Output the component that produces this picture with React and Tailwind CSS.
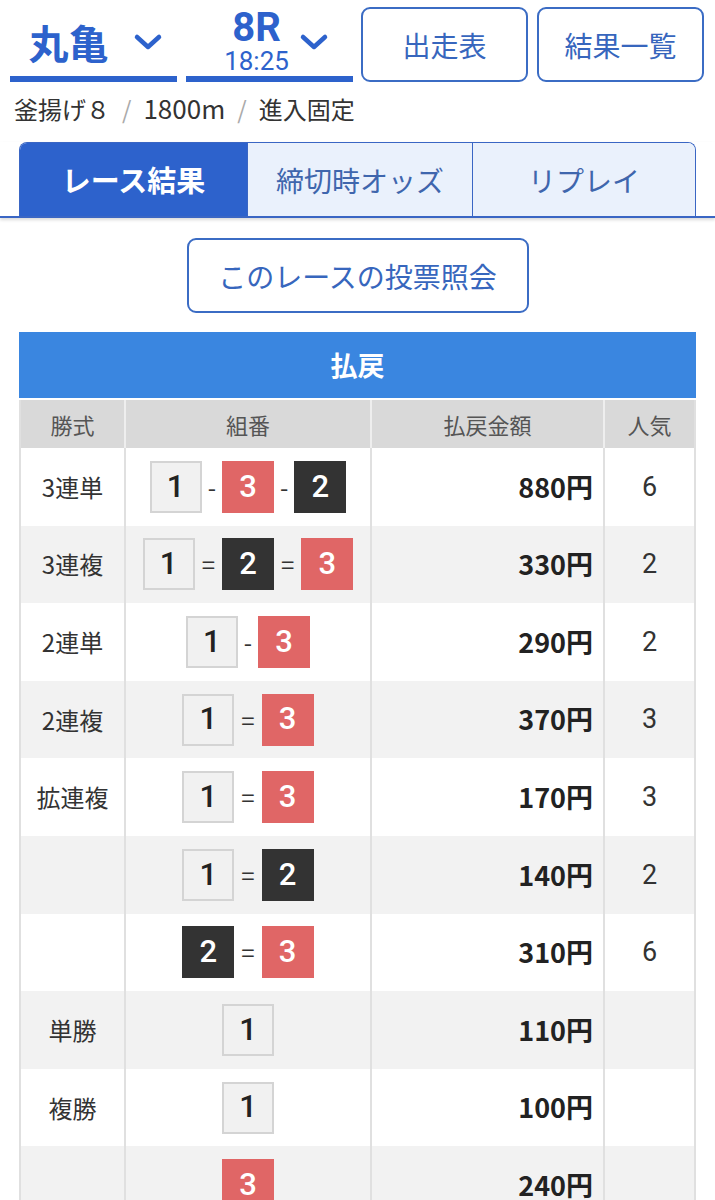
import React from 'react';

const FONT = { fontFamily: '"Noto Sans CJK JP", "Noto Sans", sans-serif' };
const DIGITS = { fontFamily: 'Roboto, "Noto Sans", sans-serif' };

// frame colours by boat number
const BOX = {
  1: 'bg-[#f1f1f1] border-2 border-[#d4d4d4] text-[#222]',
  2: 'bg-[#333333] text-white',
  3: 'bg-[#e06666] text-white',
};

const ROWS = [
  { kind: '3連単', combo: [1, 3, 2], sep: '-', pay: '880円', pop: '6' },
  { kind: '3連複', combo: [1, 2, 3], sep: '=', pay: '330円', pop: '2' },
  { kind: '2連単', combo: [1, 3], sep: '-', pay: '290円', pop: '2' },
  { kind: '2連複', combo: [1, 3], sep: '=', pay: '370円', pop: '3' },
  { kind: '拡連複', combo: [1, 3], sep: '=', pay: '170円', pop: '3' },
  { kind: '', combo: [1, 2], sep: '=', pay: '140円', pop: '2' },
  { kind: '', combo: [2, 3], sep: '=', pay: '310円', pop: '6' },
  { kind: '単勝', combo: [1], sep: '', pay: '110円', pop: '' },
  { kind: '複勝', combo: [1], sep: '', pay: '100円', pop: '' },
  { kind: '', combo: [3], sep: '', pay: '240円', pop: '' },
];

const Chevron = () => (
  <svg width="30" height="20" viewBox="0 0 30 20" className="shrink-0">
    <polyline points="4,5 15,15 26,5" fill="none" stroke="#2d62cc" strokeWidth="4.5" strokeLinecap="round" strokeLinejoin="round" />
  </svg>
);

const Boat = ({ n }) => (
  <div className={`w-[52px] h-[52px] flex items-center justify-center text-[31px] font-medium ${BOX[n]}`} style={DIGITS}>
    {n}
  </div>
);

const Combo = ({ combo, sep }) => (
  <div className={`flex items-center justify-center ${sep === '=' ? 'gap-[7px]' : 'gap-[6px]'}`}>
    {combo.map((n, i) => (
      <React.Fragment key={i}>
        {i > 0 && <span className="text-[24px] text-[#333] leading-none">{sep}</span>}
        <Boat n={n} />
      </React.Fragment>
    ))}
  </div>
);

export default function App() {
  return (
    <div className="w-[715px] h-[1200px] overflow-hidden bg-white" style={FONT}>
      {/* top selectors */}
      <div className="flex pt-[7px] pl-[10px] pr-[10px] gap-[9px]">
        <div className="w-[167px] h-[75px] flex flex-col">
          <div className="flex-1 flex items-center justify-center gap-[24px] pl-[4px]">
            <span className="text-[40px] font-bold text-[#2d62cc] leading-none">丸亀</span>
            <Chevron />
          </div>
          <div className="h-[6px] bg-[#2d62cc]" />
        </div>
        <div className="w-[167px] h-[75px] flex flex-col">
          <div className="flex-1 flex items-center justify-center gap-[10px] pl-[14px]">
            <div className="flex flex-col items-center">
              <span className="text-[40px] font-bold text-[#2d62cc] leading-[40px]" style={DIGITS}>8R</span>
              <span className="text-[26px] text-[#2d62cc] leading-[27px]" style={DIGITS}>18:25</span>
            </div>
            <Chevron />
          </div>
          <div className="h-[6px] bg-[#2d62cc]" />
        </div>
        <button className="w-[167px] h-[75px] ml-[-1px] rounded-[9px] border-2 border-[#3b6cc4] text-[28px] text-[#3766bd]">
          出走表
        </button>
        <button className="w-[167px] h-[75px] rounded-[9px] border-2 border-[#3b6cc4] text-[28px] text-[#3766bd]">
          結果一覧
        </button>
      </div>

      {/* race info */}
      <div className="pl-[14px] pt-[10px] text-[24px] text-[#333] leading-[32px]">
        釜揚げ８<span className="text-[#aaa] mx-[12px]">/</span><span className="text-[26px]">1800m</span><span className="text-[#aaa] mx-[12px]">/</span>進入固定
      </div>

      {/* tabs */}
      <div className="mt-[17px] border-b-2 border-[#3a66c4] shadow-[0_2px_3px_rgba(0,0,0,0.15)]">
        <div className="mx-[19px] h-[74px] flex rounded-t-[8px] overflow-hidden border border-b-0 border-[#3a66c4]">
          <div className="w-[227px] bg-[#2d62cc] flex items-center justify-center text-[29px] font-bold text-white">
            レース結果
          </div>
          <div className="w-[225px] bg-[#eaf1fc] border-l border-[#3a66c4] flex items-center justify-center text-[28px] text-[#3f66ad]">
            締切時オッズ
          </div>
          <div className="flex-1 bg-[#eaf1fc] border-l border-[#3a66c4] flex items-center justify-center text-[28px] text-[#3f66ad]">
            リプレイ
          </div>
        </div>
      </div>

      {/* ticket button */}
      <div className="flex justify-center pt-[20px] pb-[19px]">
        <button className="w-[342px] h-[75px] rounded-[9px] border-2 border-[#3b6cc4] text-[28px] text-[#3766bd]">
          このレースの投票照会
        </button>
      </div>

      {/* payout table */}
      <div className="mx-[19px]">
        <div className="h-[66px] bg-[#3a86e0] flex items-center justify-center text-[27px] font-bold text-white">
          払戻
        </div>
        <div className="mt-[2px] h-[48px] flex bg-[#d9d9d9] text-[22px] text-[#555] border-x-2 border-[#e0e0e0]">
          <div className="w-[103px] flex items-center justify-center">勝式</div>
          <div className="w-[246px] border-l-2 border-[#eeeeee] flex items-center justify-center">組番</div>
          <div className="w-[233px] border-l-2 border-[#eeeeee] flex items-center justify-center">払戻金額</div>
          <div className="flex-1 border-l-2 border-[#eeeeee] flex items-center justify-center">人気</div>
        </div>
        {ROWS.map((r, i) => (
          <div
            key={i}
            className={`h-[77.6px] flex border-x-2 border-[#e0e0e0] ${i % 2 === 1 ? 'bg-[#f2f2f2]' : 'bg-white'}`}
          >
            <div className="w-[103px] flex items-center justify-center text-[24px] text-[#333]">{r.kind}</div>
            <div className="w-[246px] border-l-2 border-[#e0e0e0] flex items-center justify-center">
              <Combo combo={r.combo} sep={r.sep} />
            </div>
            <div className="w-[233px] border-l-2 border-[#e0e0e0] flex items-center justify-end pr-[10px] text-[27px] font-bold text-[#222]">
              {r.pay}
            </div>
            <div className="flex-1 border-l-2 border-[#e0e0e0] flex items-center justify-center text-[27px] text-[#333]" style={DIGITS}>
              {r.pop}
            </div>
          </div>
        ))}
      </div>
    </div>
  );
}
